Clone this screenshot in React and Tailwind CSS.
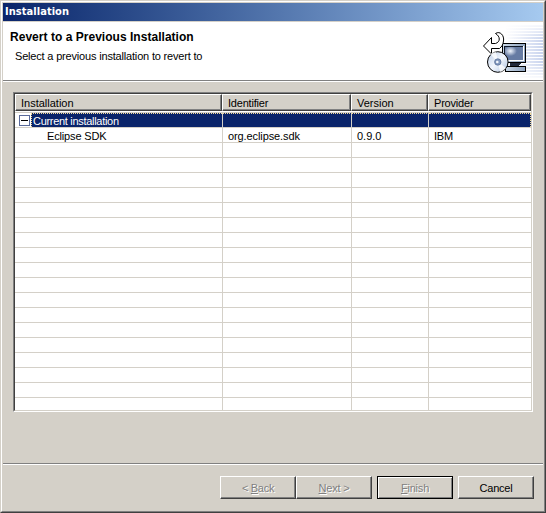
import React from 'react';

const HEAD_COLS = 'grid grid-cols-[207px_129px_77px_1fr]';
const BODY_COLS = 'grid grid-cols-[208px_129px_77px_1fr]';

const EMPTY_ROWS = Array.from({ length: 18 }, (_, i) => i);

function BannerArt() {
  const stripes = Array.from({ length: 18 }, (_, i) => i);
  return (
    <svg width="73" height="58" viewBox="470 22 73 58" shapeRendering="crispEdges" className="block">
      <defs>
        <linearGradient id="fade" x1="0" x2="1" y1="0" y2="0">
          <stop offset="0" stopColor="#c9d4ee" stopOpacity="0" />
          <stop offset="1" stopColor="#c9d4ee" />
        </linearGradient>
        <linearGradient id="veil" x1="0" x2="0" y1="0" y2="1">
          <stop offset="0" stopColor="#fff" />
          <stop offset="0.3" stopColor="#fff" stopOpacity="0" />
          <stop offset="0.7" stopColor="#fff" stopOpacity="0" />
          <stop offset="1" stopColor="#fff" />
        </linearGradient>
        <linearGradient id="disc" x1="0" x2="1" y1="0" y2="1">
          <stop offset="0" stopColor="#b9cbe6" />
          <stop offset="0.5" stopColor="#f3f7fd" />
          <stop offset="1" stopColor="#a9bfde" />
        </linearGradient>
        <linearGradient id="case" x1="0" x2="1" y1="0" y2="0">
          <stop offset="0" stopColor="#cbd9e8" />
          <stop offset="1" stopColor="#8ea3c0" />
        </linearGradient>
        <radialGradient id="glare" cx="0.3" cy="0.36" r="0.36">
          <stop offset="0" stopColor="#f0f5fd" />
          <stop offset="1" stopColor="#667ba3" />
        </radialGradient>
      </defs>
      {stripes.map((i) => (
        <rect key={i} x="505" y={25 + i * 3} width="38" height="2" fill="url(#fade)" />
      ))}
      <rect x="500" y="22" width="43" height="58" fill="url(#veil)" />
      <rect x="502.500" y="43.500" width="23" height="19" fill="url(#case)" stroke="#000" />
      <rect x="505" y="46" width="18" height="14" fill="url(#glare)" />
      <path d="M504.500 60V46.500H523" fill="none" stroke="#101828" />
      <path d="M505 60.500H523.500V46" fill="none" stroke="#fff" />
      <path d="M510 63H522L518 66H510Z" fill="#20293c" />
      <rect x="505.500" y="66.500" width="20" height="5" fill="url(#case)" stroke="#000" />
      <g shapeRendering="auto">
        <path
          d="M483.500 46L491.500 37.500V43.500H495.500C500.500 42 500.500 36.500 495.500 33.500C500 30.500 504.500 35.500 503.500 41C503 44.500 502 46.500 499.500 48.500H491.500V54Z"
          fill="#fff"
          stroke="#000"
        />
        <circle cx="497.800" cy="62" r="10.300" fill="url(#disc)" stroke="#000" />
        <path d="M498 62L490 54A11 11 0 0 1 496 52ZM498 62L506 68A11 11 0 0 1 500 72Z" fill="#fff" opacity="0.75" />
        <circle cx="497.800" cy="62" r="3.200" fill="#8298bd" stroke="#5b7199" strokeWidth="0.800" />
        <circle cx="497.300" cy="62" r="1.300" fill="#f4f7fc" />
      </g>
    </svg>
  );
}

function HeaderCell({ children, tracking = '' }) {
  return (
    <div
      className={`h-[17px] border-t border-l border-t-white border-l-white border-r border-b border-r-[#404040] border-b-[#404040] pl-[5px] leading-[16px] whitespace-nowrap shadow-[inset_-1px_-1px_0_#808080] ${tracking}`}
    >
      {children}
    </div>
  );
}

function Row({ cells = [], tall = 'h-[15px] border-b' }) {
  return (
    <div className={`${BODY_COLS} grid-rows-[100%] ${tall} border-[#d4d0c8]`}>
      <div className="border-r border-[#d4d0c8] pl-[32px] leading-[17px] tracking-[-0.15px]">{cells[0]}</div>
      <div className="border-r border-[#d4d0c8] pl-[5px] leading-[17px] tracking-[-0.1px]">{cells[1]}</div>
      <div className="border-r border-[#d4d0c8] pl-[5px] leading-[17px]">{cells[2]}</div>
      <div className="pl-[5px] leading-[17px] tracking-[-0.2px]">{cells[3]}</div>
    </div>
  );
}

function Button({ children, disabled, isDefault, tracking = '' }) {
  const frame = isDefault
    ? 'border-black shadow-[inset_1px_1px_0_#fff,inset_-1px_-1px_0_#808080]'
    : 'border-t-white border-l-white border-r-[#404040] border-b-[#404040] shadow-[inset_-1px_-1px_0_#808080]';
  return (
    <button
      disabled={disabled}
      className={`block h-[23px] w-[76px] border bg-[#d4d0c8] text-center leading-[20px] whitespace-nowrap ${frame} ${tracking} ${
        disabled ? 'text-[#808080] [text-shadow:1px_1px_0_#fff]' : 'text-black'
      }`}
    >
      {children}
    </button>
  );
}

export default function App() {
  return (
    <div className="flex h-[513px] w-[546px] flex-col border-t border-l border-r border-b border-t-[#d4d0c8] border-l-[#d4d0c8] border-r-[#404040] border-b-[#404040] bg-[#d4d0c8] font-['Liberation_Sans',Arial,sans-serif] text-[11px] text-black">
      <div className="flex grow flex-col border-t border-l border-r border-b border-t-white border-l-white border-r-[#808080] border-b-[#808080] pt-px pr-px pl-px">
        <div className="h-[18px] shrink-0 bg-linear-to-r from-[#0a246a] to-[#a6caf0] pl-[2px] font-['DejaVu_Sans_Condensed','DejaVu_Sans',sans-serif] text-[11px] leading-[18px] font-bold tracking-[0.05px] text-white">
          Installation
        </div>
        <div className="mt-px flex h-[59px] shrink-0 justify-between border-b border-[#808080] bg-white">
          <div className="pt-[7px] pl-[7px] whitespace-nowrap">
            <h1 className="text-[12px] leading-[16px] font-bold tracking-[0.03px]">Revert to a Previous Installation</h1>
            <p className="mt-[3px] pl-[5px] leading-[16px] tracking-[-0.18px]">Select a previous installation to revert to</p>
          </div>
          <BannerArt />
        </div>
        <div className="h-px shrink-0 bg-white" />

        <div className="mt-[10px] ml-[10px] flex h-[320px] w-[520px] shrink-0 flex-col border border-t-[#808080] border-l-[#808080] border-r-white border-b-white">
          <div className="flex grow flex-col border border-t-[#404040] border-l-[#404040] border-r-[#d4d0c8] border-b-[#d4d0c8] bg-white">
            <div className={`${HEAD_COLS} h-[17px] shrink-0 bg-[#d4d0c8]`}>
              <HeaderCell>Installation</HeaderCell>
              <HeaderCell tracking="tracking-[-0.2px]">Identifier</HeaderCell>
              <HeaderCell>Version</HeaderCell>
              <HeaderCell tracking="tracking-[-0.2px]">Provider</HeaderCell>
            </div>
            <div className="h-px shrink-0 bg-white" />
            <div className="h-px shrink-0 bg-[#d4d0c8]" />
            <div className={`${BODY_COLS} h-[15px] shrink-0 grid-rows-[100%] border-b border-[#d4d0c8] text-white`}>
              <div className="flex border-r border-[#d4d0c8]">
                <div className="flex w-[16px] items-center justify-center pl-[2px]">
                  <div className="flex h-[11px] w-[11px] items-center justify-center border border-[#5a6a9a] bg-white">
                    <div className="h-px w-[7px] bg-black" />
                  </div>
                </div>
                <div className="grow border-t border-l border-dotted border-[#f5db95] bg-[#0a246a] pl-px leading-[14px] tracking-[-0.3px] whitespace-nowrap">
                  Current installation
                </div>
              </div>
              <div className="border-t border-r border-t-[#f5db95] border-r-[#d4d0c8] bg-[#0a246a] [border-top-style:dotted]" />
              <div className="border-t border-r border-t-[#f5db95] border-r-[#d4d0c8] bg-[#0a246a] [border-top-style:dotted]" />
              <div className="border-t border-r border-dotted border-[#f5db95] bg-[#0a246a]" />
            </div>
            <Row cells={['Eclipse SDK', 'org.eclipse.sdk', '0.9.0', 'IBM']} />
            {EMPTY_ROWS.map((i) => (
              <Row key={i} tall={i === 17 ? 'h-[12px]' : 'h-[15px] border-b'} />
            ))}
          </div>
        </div>

        <div className="mt-[51px] h-[2px] shrink-0 border-b border-white bg-[#808080]" />
        <div className="flex justify-end pt-[11px] pr-[9px]">
          <Button disabled tracking="tracking-[-0.3px]">&lt; <u>B</u>ack</Button>
          <Button disabled tracking="tracking-[-0.2px]"><u>N</u>ext &gt;</Button>
          <div className="w-[5px]" />
          <Button disabled isDefault tracking="tracking-[-0.2px]"><u>F</u>inish</Button>
          <div className="w-[5px]" />
          <Button tracking="tracking-[-0.2px]">Cancel</Button>
        </div>
      </div>
    </div>
  );
}
